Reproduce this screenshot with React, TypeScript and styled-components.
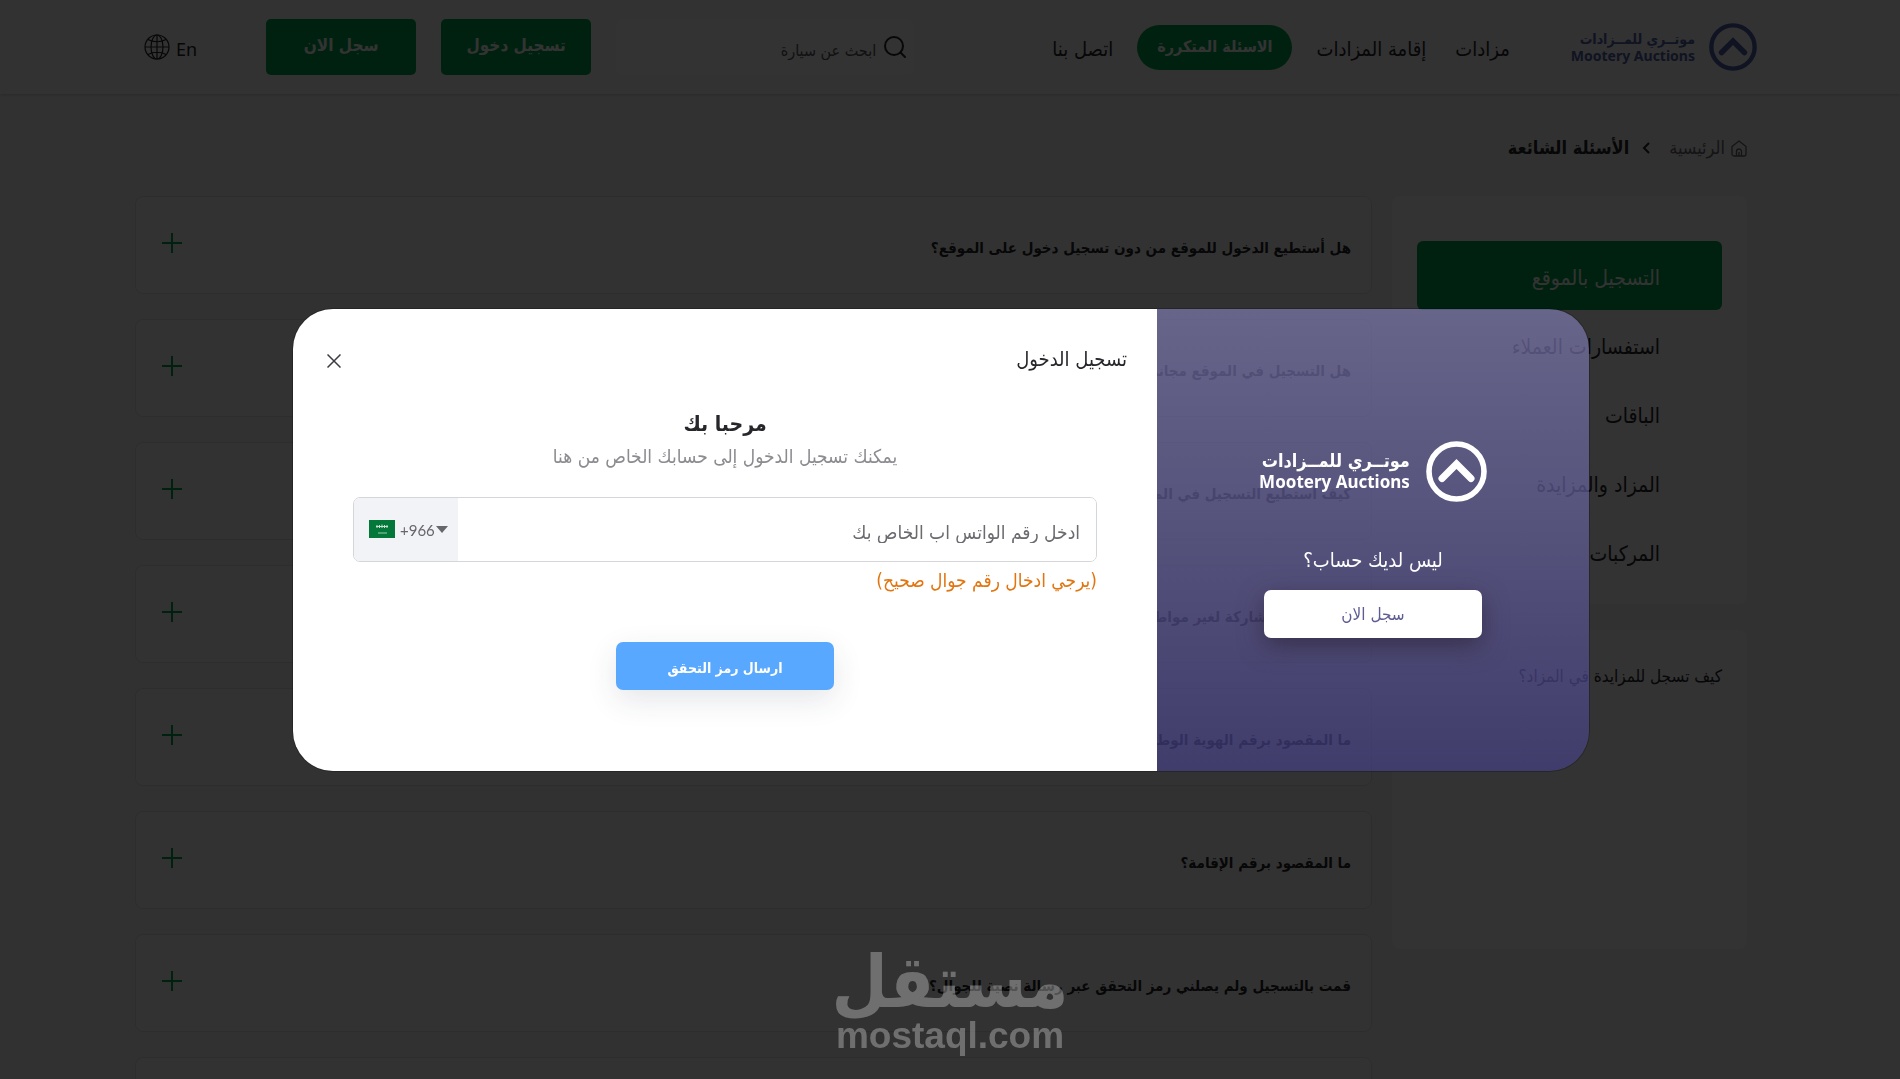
import React from "react";
import styled, { createGlobalStyle } from "styled-components";

const green = "#00a54b";
const ink = "#26262b";

const GlobalStyle = createGlobalStyle`
  *, *::before, *::after { box-sizing: border-box; }
  body {
    margin: 0;
    overflow: hidden;
    background: #f5f5f5;
    color: ${ink};
    font-family: "DejaVu Sans Condensed", "DejaVu Sans", sans-serif;
    font-size: 16px;
  }
  button, input, select { font: inherit; color: inherit; }
  button { cursor: pointer; border: 0; background: none; padding: 0; }
  a { color: inherit; text-decoration: none; }
  h1, h2, p { margin: 0; }
`;

const Page = styled.div`
  height: 100vh;
  overflow: hidden;
`;

const Header = styled.header`
  display: flex;
  align-items: center;
  justify-content: space-between;
  height: 94px;
  padding: 0 143px 0 144px;
  background: #f8f8f8;
  box-shadow: 0 1px 3px rgba(0, 0, 0, 0.18);
`;

const HeaderGroup = styled.div`
  display: flex;
  align-items: center;
  gap: 25px;
`;

const Brand = styled.a<{ $large?: boolean }>`
  display: flex;
  align-items: center;
  gap: ${(p) => (p.$large ? 16 : 14)}px;
  color: ${(p) => (p.$large ? "#fff" : "#4f63a8")};
`;

const BrandNames = styled.span<{ $large?: boolean }>`
  display: flex;
  flex-direction: column;
  align-items: flex-start;
  font-weight: 700;
  white-space: nowrap;
  font-size: ${(p) => (p.$large ? 18 : 14)}px;
  line-height: ${(p) => (p.$large ? 22 : 18)}px;
`;

const BrandLatin = styled.span<{ $large?: boolean }>`
  font-family: "Noto Sans", "Open Sans", sans-serif;
  font-size: ${(p) => (p.$large ? 17 : 14)}px;
  line-height: ${(p) => (p.$large ? 20 : 16)}px;
`;

const Nav = styled.nav`
  display: flex;
  align-items: center;
  gap: 19px;
  margin-right: 31px;
  line-height: 24px;
`;

const NavLink = styled.a<{ $active?: boolean }>`
  padding: ${(p) => (p.$active ? "10px 20px 11px" : "4px 5px 0")};
  border-radius: 24px;
  background: ${(p) => (p.$active ? green : "transparent")};
  color: ${(p) => (p.$active ? "#fff" : ink)};
  font-weight: ${(p) => (p.$active ? 700 : 400)};
  font-size: ${(p) => (p.$active ? 16 : 20)}px;
`;

const SearchBox = styled.label`
  display: flex;
  align-items: center;
  gap: 8px;
  width: 298px;
  height: 56px;
  padding: 0 8px;
  border-radius: 6px;
  background: #fcfcfc;
  color: ${ink};
`;

const SearchInput = styled.input`
  flex: 1;
  min-width: 0;
  padding: 6px 0 0;
  border: 0;
  outline: 0;
  background: none;
  font-size: 16px;
  &::placeholder { color: #55555a; opacity: 1; }
`;

const HeaderButton = styled.button`
  width: 150px;
  height: 56px;
  padding-bottom: 4px;
  border-radius: 5px;
  background: ${green};
  color: #fff;
  font-weight: 700;
  font-size: 17px;
`;

const Language = styled.a`
  display: flex;
  align-items: center;
  gap: 6px;
  margin-right: 44px;
  font-family: "Noto Sans", sans-serif;
  font-size: 18px;
  line-height: 24px;
`;

const LanguageName = styled.span`
  padding-top: 4px;
`;

const Main = styled.main`
  padding: 42px 153px 0 135px;
`;

const Breadcrumb = styled.nav`
  display: flex;
  align-items: center;
  gap: 6px;
  height: 24px;
  font-size: 18px;
  line-height: 24px;
`;

const BreadcrumbLink = styled.a`
  display: flex;
  align-items: center;
  gap: 6px;
  color: #66666b;
`;

const BreadcrumbMark = styled.span`
  display: flex;
  padding: 0 13px 0 7px;
`;

const Columns = styled.div`
  display: flex;
  align-items: flex-start;
  gap: 20px;
  margin-top: 36px;
`;

const Sidebar = styled.aside`
  display: flex;
  flex-direction: column;
  gap: 26px;
  flex: 0 0 355px;
`;

const Panel = styled.section<{ $tall?: boolean }>`
  min-height: ${(p) => (p.$tall ? 319 : 408)}px;
  padding: ${(p) => (p.$tall ? 34 : 45)}px 25px 18px;
  border-radius: 8px;
  background: #fcfcfc;
`;

const Topic = styled.button<{ $active?: boolean }>`
  display: block;
  width: 100%;
  height: 69px;
  padding: 4px 62px 0 0;
  border-radius: 6px;
  text-align: right;
  font-size: 21px;
  line-height: 24px;
  background: ${(p) => (p.$active ? green : "transparent")};
  color: ${(p) => (p.$active ? "#fff" : ink)};
`;

const PanelTitle = styled.p`
  font-size: 17px;
  line-height: 24px;
`;

const Questions = styled.div`
  display: flex;
  flex: 1;
  flex-direction: column;
  gap: 25px;
`;

const Question = styled.button`
  display: flex;
  align-items: center;
  justify-content: space-between;
  height: 98px;
  padding: 0 20px 4px 26px;
  border: 1px solid #dedede;
  border-radius: 8px;
  background: #fbfbfb;
  color: ${green};
`;

const QuestionText = styled.span`
  padding-top: 10px;
  color: ${ink};
  font-size: 15px;
  font-weight: 700;
  line-height: 24px;
`;

const Backdrop = styled.div`
  position: fixed;
  inset: 0;
  display: flex;
  align-items: center;
  justify-content: center;
  padding-right: 18px;
  background: rgba(0, 0, 0, 0.8);
`;

const Dialog = styled.section`
  display: grid;
  grid-template-columns: 1fr 2fr;
  width: 1296px;
  max-width: 94vw;
  min-height: 462px;
  border-radius: 40px;
  overflow: hidden;
  box-shadow: 0 0 0 1px rgba(0, 0, 0, 0.25);
`;

const JoinSide = styled.div`
  display: flex;
  flex-direction: column;
  align-items: center;
  padding-top: 132px;
  background: linear-gradient(rgba(140, 135, 197, 0.6), rgba(73, 68, 146, 0.6));
  color: #fff;
`;

const JoinText = styled.p`
  margin: 46px 0 18px;
  font-size: 20px;
  line-height: 24px;
`;

const DialogButton = styled.button<{ $primary?: boolean }>`
  width: 218px;
  height: 48px;
  padding-top: ${(p) => (p.$primary ? 4 : 0)}px;
  border-radius: 7px;
  font-size: ${(p) => (p.$primary ? 14 : 17)}px;
  font-weight: ${(p) => (p.$primary ? 700 : 400)};
  background: ${(p) => (p.$primary ? "#59a8ff" : "#fff")};
  color: ${(p) => (p.$primary ? "#fff" : "#5f5c92")};
  box-shadow: ${(p) =>
    p.$primary ? "0 10px 30px rgba(40, 50, 70, 0.12)" : "0 8px 24px rgba(45, 35, 50, 0.6)"};
`;

const FormSide = styled.div`
  display: flex;
  flex-direction: column;
  padding: 36px 30px 0 34px;
  background: #fff;
`;

const FormHeader = styled.header`
  display: flex;
  align-items: center;
  justify-content: space-between;
  height: 28px;
`;

const DialogTitle = styled.h2`
  font-size: 20px;
  font-weight: 400;
  line-height: 24px;
`;

const CloseButton = styled.button`
  display: flex;
  padding-top: 4px;
  color: #3c3c42;
`;

const Form = styled.form`
  display: flex;
  flex-direction: column;
  align-items: center;
  padding: 35px 30px 0 26px;
`;

const Welcome = styled.h1`
  font-size: 21px;
  line-height: 32px;
`;

const Hint = styled.p`
  color: #8b8b90;
  font-size: 19px;
  line-height: 32px;
`;

const PhoneField = styled.div`
  display: flex;
  direction: ltr;
  width: 100%;
  height: 65px;
  margin-top: 25px;
  border: 1px solid #d5d6da;
  border-radius: 7px;
  overflow: hidden;
`;

const Country = styled.label`
  display: flex;
  align-items: center;
  flex: 0 0 104px;
  padding-left: 15px;
  background: #f2f3f6;
  color: #66666b;
`;

const CountrySelect = styled.select`
  width: 36px;
  margin-left: 5px;
  padding: 2px 0 0;
  border: 0;
  outline: 0;
  appearance: none;
  background: transparent;
  font-family: Lato, sans-serif;
  font-size: 15px;
`;

const PhoneInput = styled.input`
  flex: 1;
  min-width: 0;
  padding: 6px 16px 0;
  border: 0;
  outline: 0;
  direction: rtl;
  font-size: 19px;
  &::placeholder { color: #6a6a6f; opacity: 1; }
`;

const ErrorText = styled.p`
  align-self: flex-start;
  margin: 6px 0 50px;
  color: #e27510;
  font-size: 19px;
  line-height: 24px;
`;

const Watermark = styled.div`
  position: fixed;
  left: 50%;
  bottom: 22px;
  display: flex;
  flex-direction: column;
  align-items: center;
  transform: translateX(-50%);
  opacity: 0.3;
  color: #fff;
  font-weight: 700;
  pointer-events: none;
`;

const WatermarkArabic = styled.span`
  font-size: 72px;
  line-height: 66px;
`;

const WatermarkLatin = styled.span`
  font-family: "Liberation Sans", Arial, sans-serif;
  font-size: 37px;
  line-height: 42px;
`;

const BrandMark = ({ size }: { size: number }) => (
  <svg width={size} height={size} viewBox="0 0 61 61" fill="none" stroke="currentColor" aria-hidden="true">
    <circle cx="30.5" cy="30.5" r="27.5" strokeWidth="5.6" />
    <path d="M16 37.5 30.5 23 45 37.5" strokeWidth="7" strokeLinecap="round" strokeLinejoin="miter" />
  </svg>
);

const BrandBlock = ({ large }: { large?: boolean }) => (
  <Brand $large={large} href="#">
    <BrandMark size={large ? 61 : 48} />
    <BrandNames $large={large}>
      <span>موتــري للمــزادات</span>
      <BrandLatin $large={large} dir="ltr">Mootery Auctions</BrandLatin>
    </BrandNames>
  </Brand>
);

const GlobeIcon = () => (
  <svg width="26" height="26" viewBox="0 0 26 26" fill="none" stroke="currentColor" strokeWidth="1.2" aria-hidden="true">
    <circle cx="13" cy="13" r="12" />
    <ellipse cx="13" cy="13" rx="6" ry="12" />
    <path d="M13 1v24M1 13h24M4 5.5c5 3 13 3 18 0M4 20.5c5-3 13-3 18 0" />
  </svg>
);

const SearchIcon = () => (
  <svg width="22" height="22" viewBox="0 0 22 22" fill="none" stroke="currentColor" strokeWidth="2" strokeLinecap="round" aria-hidden="true">
    <circle cx="10" cy="10" r="9" />
    <path d="m16.500 16.500 4.500 4.500" />
  </svg>
);

const HomeIcon = () => (
  <svg width="16" height="17" viewBox="0 0 16 17" fill="none" stroke="currentColor" strokeWidth="1.3" strokeLinejoin="round" aria-hidden="true">
    <path d="M1 6.500 8 1l7 5.500V14a2 2 0 0 1-2 2H3a2 2 0 0 1-2-2Z" />
    <path d="M5.500 16v-4.500a2.500 2.500 0 0 1 5 0V16M8 12v4" />
  </svg>
);

const ChevronIcon = () => (
  <svg width="8" height="12" viewBox="0 0 8 12" fill="none" stroke="currentColor" strokeWidth="2" aria-hidden="true">
    <path d="M7 1 2 6l5 5" />
  </svg>
);

const PlusIcon = () => (
  <svg width="20" height="20" viewBox="0 0 20 20" stroke="currentColor" strokeWidth="2" aria-hidden="true">
    <path d="M10 0v20M0 10h20" />
  </svg>
);

const CloseIcon = () => (
  <svg width="14" height="14" viewBox="0 0 14 14" stroke="currentColor" strokeWidth="1.5" aria-hidden="true">
    <path d="m.5.5 13 13M13.500.5l-13 13" />
  </svg>
);

const FlagIcon = () => (
  <svg width="26" height="18" viewBox="0 0 26 18" aria-hidden="true">
    <rect width="26" height="18" fill="#04783a" />
    <path d="M7 6.500h12M8 5v3M10.500 5v3M13 4.500v3.500M15.500 5v3M18 5v3" stroke="#c6dfd0" strokeWidth="1" />
    <path d="M9 13h9" stroke="#9ccbb0" strokeWidth="1" />
  </svg>
);

const CaretIcon = () => (
  <svg width="12" height="7" viewBox="0 0 12 7" fill="currentColor" aria-hidden="true">
    <path d="M0 0h12L6 7Z" />
  </svg>
);

const links = ["مزادات", "إقامة المزادات", "الاسئلة المتكررة", "اتصل بنا"];
const topics = ["التسجيل بالموقع", "استفسارات العملاء", "الباقات", "المزاد والمزايدة", "المركبات"];
const questions = [
  "هل أستطيع الدخول للموقع من دون تسجيل دخول على الموقع؟",
  "هل التسجيل في الموقع مجاني؟",
  "كيف استطيع التسجيل في الموقع؟",
  "هل يمكن المشاركة لغير مواطني المملكة؟",
  "ما المقصود برقم الهوية الوطنية؟",
  "ما المقصود برقم الإقامة؟",
  "قمت بالتسجيل ولم يصلني رمز التحقق عبر رسالة نصية للجوال؟",
  "",
];

export default function App() {
  return (
    <Page dir="rtl" lang="ar">
      <GlobalStyle />
      <Header>
        <HeaderGroup>
          <BrandBlock />
          <Nav>
            {links.map((text, i) => (
              <NavLink key={text} href="#" $active={i === 2}>{text}</NavLink>
            ))}
          </Nav>
        </HeaderGroup>
        <HeaderGroup>
          <SearchBox>
            <SearchIcon />
            <SearchInput type="search" placeholder="ابحث عن سيارة" />
          </SearchBox>
          <HeaderButton>تسجيل دخول</HeaderButton>
          <HeaderButton>سجل الان</HeaderButton>
          <Language href="#" dir="ltr">
            <GlobeIcon />
            <LanguageName>En</LanguageName>
          </Language>
        </HeaderGroup>
      </Header>

      <Main>
        <Breadcrumb>
          <BreadcrumbLink href="#"><HomeIcon />الرئيسية</BreadcrumbLink>
          <BreadcrumbMark><ChevronIcon /></BreadcrumbMark>
          <strong>الأسئلة الشائعة</strong>
        </Breadcrumb>
        <Columns>
          <Sidebar>
            <Panel>
              {topics.map((text, i) => (
                <Topic key={text} $active={i === 0}>{text}</Topic>
              ))}
            </Panel>
            <Panel $tall>
              <PanelTitle>كيف تسجل للمزايدة في المزاد؟</PanelTitle>
            </Panel>
          </Sidebar>
          <Questions>
            {questions.map((text, i) => (
              <Question key={i} aria-expanded={false}>
                <QuestionText>{text}</QuestionText>
                <PlusIcon />
              </Question>
            ))}
          </Questions>
        </Columns>
      </Main>

      <Backdrop>
        <Dialog role="dialog" aria-modal="true" aria-labelledby="login-title">
          <JoinSide>
            <BrandBlock large />
            <JoinText>ليس لديك حساب؟</JoinText>
            <DialogButton>سجل الان</DialogButton>
          </JoinSide>
          <FormSide>
            <FormHeader>
              <DialogTitle id="login-title">تسجيل الدخول</DialogTitle>
              <CloseButton aria-label="إغلاق"><CloseIcon /></CloseButton>
            </FormHeader>
            <Form onSubmit={(e) => e.preventDefault()}>
              <Welcome>مرحبا بك</Welcome>
              <Hint>يمكنك تسجيل الدخول إلى حسابك الخاص من هنا</Hint>
              <PhoneField>
                <Country>
                  <FlagIcon />
                  <CountrySelect aria-label="رمز الدولة">
                    <option>+966</option>
                  </CountrySelect>
                  <CaretIcon />
                </Country>
                <PhoneInput type="tel" aria-label="رقم الواتس اب" placeholder="ادخل رقم الواتس اب الخاص بك" />
              </PhoneField>
              <ErrorText>(يرجي ادخال رقم جوال صحيح)</ErrorText>
              <DialogButton $primary type="submit">ارسال رمز التحقق</DialogButton>
            </Form>
          </FormSide>
        </Dialog>
      </Backdrop>

      <Watermark>
        <WatermarkArabic>مستقل</WatermarkArabic>
        <WatermarkLatin dir="ltr">mostaql.com</WatermarkLatin>
      </Watermark>
    </Page>
  );
}
